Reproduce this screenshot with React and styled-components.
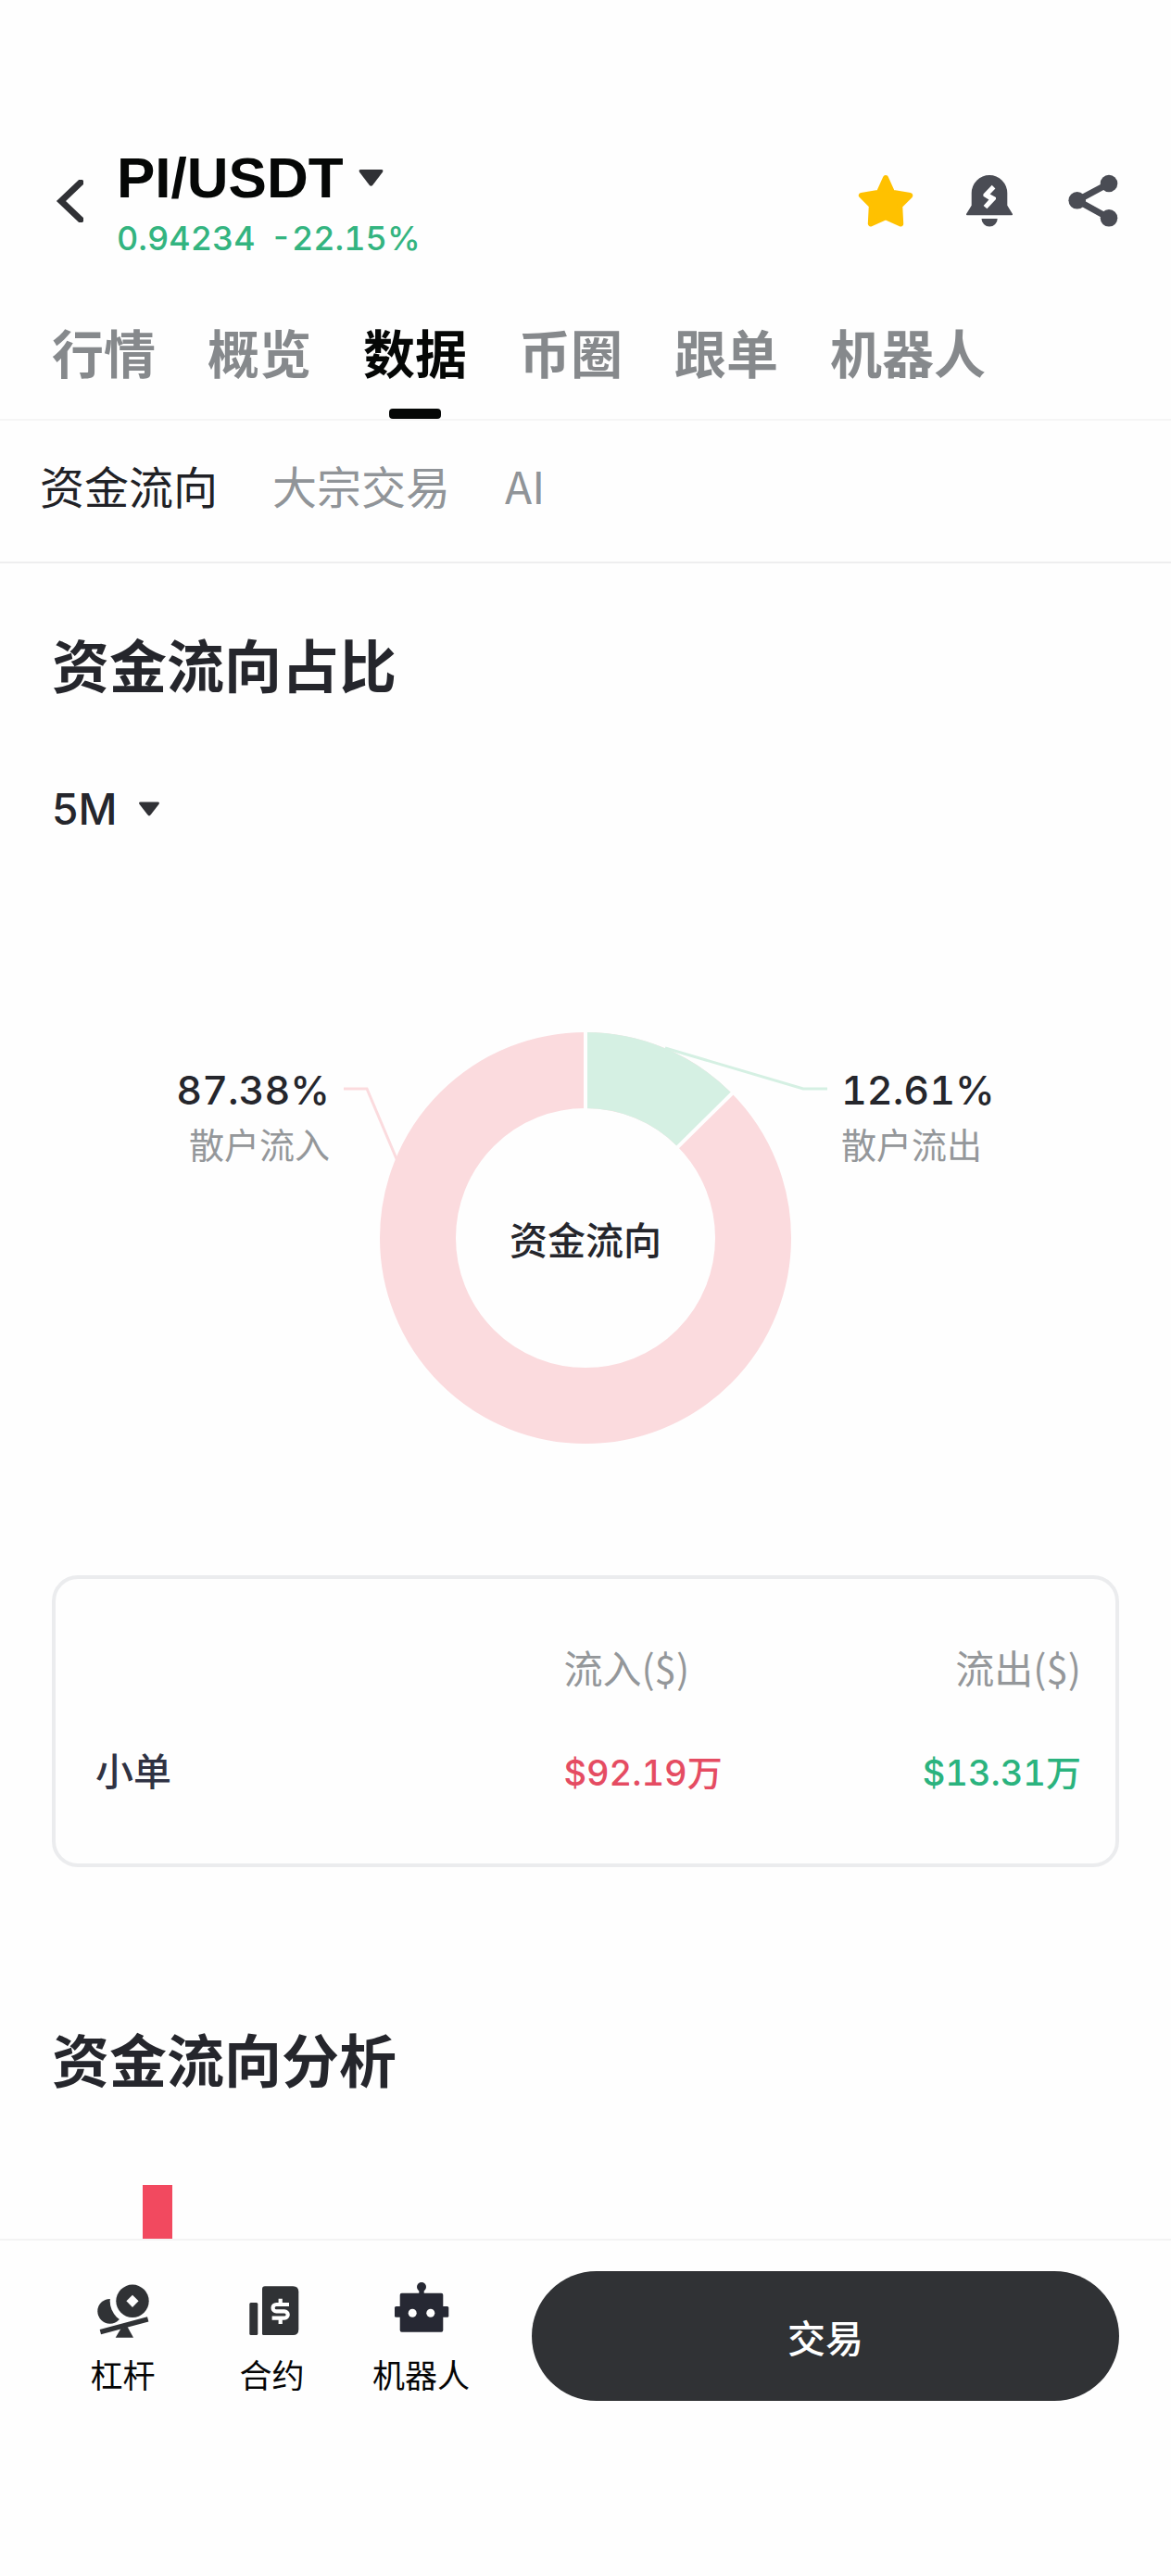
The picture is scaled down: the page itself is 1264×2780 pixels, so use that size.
import React, { useState } from 'react';
import styled, { createGlobalStyle } from 'styled-components';

const cjk = `"Noto Sans CJK SC", sans-serif`;
const latin = `Inter, "Noto Sans CJK SC", sans-serif`;

const GlobalStyle = createGlobalStyle`
  * {
    box-sizing: border-box;
  }
  body {
    margin: 0;
    background: #fefefe;
    color: #25262c;
    font-family: ${cjk};
  }
  h1, h2, p, figure {
    margin: 0;
  }
  button, select {
    padding: 0;
    border: none;
    background: none;
    color: inherit;
    font-family: inherit;
    cursor: pointer;
  }
  svg {
    display: block;
  }
`;

const Page = styled.div`
  display: flex;
  flex-direction: column;
  min-height: 100vh;
`;

const Header = styled.header`
  display: flex;
  align-items: center;
  padding: 160px 54px 0 60px;
`;

const BackButton = styled.button`
  width: 30px;
  margin-right: 36px;
`;

const PairInfo = styled.div`
  flex: 1;
`;

const PairButton = styled.button`
  display: flex;
  align-items: center;
  gap: 16px;
`;

const PairName = styled.h1`
  font: 700 62px/64px "Liberation Sans", Arial, sans-serif;
  color: #050706;
`;

const Price = styled.p`
  display: flex;
  gap: 16px;
  margin-top: 16px;
  font: 500 36px/34px ${latin};
  font-variant-numeric: tabular-nums;
  color: #33b480;
`;

const Actions = styled.div`
  display: flex;
  gap: 52px;
`;

const TabBar = styled.nav`
  display: flex;
  gap: 56px;
  margin-top: 75px;
  padding: 0 56px;
  border-bottom: 2px solid #f5f5f5;
`;

const Tab = styled.button`
  display: flex;
  flex-direction: column;
  align-items: center;
  gap: 32px;
  font-size: 56px;
  font-weight: 700;
  line-height: 60px;
  white-space: nowrap;
  color: ${(p) => (p.$active ? '#050706' : '#86898c')};

  &::after {
    content: '';
    width: 56px;
    height: 11px;
    border-radius: 4px;
    background: ${(p) => (p.$active ? '#050706' : 'transparent')};
  }
`;

const SubTabBar = styled.nav`
  display: flex;
  gap: 59px;
  padding: 39px 43px 53px;
  border-bottom: 2px solid #eeeeef;
`;

const SubTab = styled.button`
  font-size: 48px;
  line-height: 60px;
  color: ${(p) => (p.$active ? '#202126' : '#909498')};
`;

const Main = styled.main`
  flex: 1;
  padding: 73px 56px 0;
`;

const SectionTitle = styled.h2`
  font-size: 62px;
  font-weight: 700;
  line-height: 70px;
`;

const Period = styled.label`
  display: flex;
  align-items: center;
  gap: 24px;
  margin-top: 97px;
`;

const PeriodSelect = styled.select`
  appearance: none;
  field-sizing: content;
  font: 500 46px/50px ${latin};
`;

const Chart = styled.figure`
  display: grid;
  grid-template-columns: 1fr 522px 1fr;
  column-gap: 15px;
  margin-top: 216px;
`;

const Share = styled.div`
  padding-top: 38px;
  text-align: ${(p) => p.$align};
`;

const Percent = styled.p`
  font: 500 43px/48px ${latin};
  font-variant-numeric: tabular-nums;
`;

const ShareName = styled.p`
  margin-top: 12px;
  font-size: 38px;
  line-height: 44px;
  color: #94979a;
`;

const Ring = styled.div`
  display: grid;
  place-items: center;

  > * {
    grid-area: 1 / 1;
  }
`;

const RingTitle = styled.figcaption`
  font-size: 41px;
  font-weight: 500;
  line-height: 48px;
`;

const Card = styled.div`
  margin-top: 142px;
  padding: 70px 37px 73px 43px;
  border: 4px solid #ebecee;
  border-radius: 28px;
`;

const FlowTable = styled.table`
  width: 100%;
  table-layout: fixed;
  border-collapse: collapse;
  line-height: 50px;

  th, td {
    padding: 0;
    text-align: left;
    vertical-align: baseline;
  }
  thead th {
    padding-bottom: 60px;
    font-size: 42px;
    font-weight: 400;
    color: #94979a;
  }
  tbody th {
    font-size: 41px;
    font-weight: 500;
    color: #2f3243;
  }
  th:first-child {
    width: 47.5%;
  }
  th:last-child, td:last-child {
    text-align: right;
  }
`;

const Amount = styled.td`
  font: 500 38px/50px ${latin};
  font-variant-numeric: tabular-nums;
  color: ${(p) => (p.$up ? '#e54c62' : '#2bb37e')};
`;

const Analysis = styled.section`
  margin-top: 171px;
`;

const BarChart = styled.div`
  display: flex;
  height: 58px;
  margin-top: 102px;
  padding-left: 98px;
`;

const Bar = styled.div`
  width: 32px;
  background: #f2495f;
`;

const Footer = styled.footer`
  display: flex;
  align-items: center;
  gap: 39px;
  padding: 33px 56px 189px 52px;
  border-top: 2px solid #f3f3f3;
`;

const FooterNav = styled.nav`
  flex: 483;
  display: grid;
  grid-template-columns: repeat(3, 1fr);
  padding-top: 5px;
`;

const FooterLink = styled.a`
  display: flex;
  flex-direction: column;
  align-items: center;
  gap: 17px;
  font-size: 35px;
  line-height: 44px;
  color: #050505;
  text-decoration: none;
`;

const TradeButton = styled.button`
  flex: 634;
  height: 140px;
  border-radius: 70px;
  background: #303235;
  color: #fff;
  font-size: 41px;
  font-weight: 500;
`;

const Caret = ({ width, height }) => (
  <svg width={width} height={height} viewBox="0 0 26 18" fill="#303135" aria-hidden="true">
    <path d="M2 0H24Q27 0 25.3 3L15 16.5Q13 19 11 16.5L.7 3Q-1 0 2 0Z" />
  </svg>
);

const StarIcon = () => (
  <svg width="60" height="60" viewBox="0 0 60 60" fill="#ffc100" stroke="#ffc100" strokeWidth="6" strokeLinejoin="round">
    <path d="M30 5L37 20.6L56.3 24L45.2 35L46.2 54.4L30 47.2L13.8 54.4L14.8 35L3.9 24L23 20.6Z" />
  </svg>
);

const BellIcon = () => (
  <svg width="60" height="60" viewBox="0 0 60 60" fill="#4a4c54">
    <path d="M10.7 21.3A19.3 19.3 0 0 1 49.3 21.3V34.7L55 44Q55.3 45.3 54 45.3H6Q4.7 45.3 5 44L10.7 34.7Z" />
    <path d="M21.5 49H38.7A8.6 8.6 0 0 1 21.5 49Z" />
    <path fill="#fff" d="M32.7 12.8L36.4 16.4L30.6 22.4L37 26V28L27.4 38.2L23.6 35L29.4 28.6L23.4 24.8V22.5Z" />
  </svg>
);

const ShareIcon = () => (
  <svg width="60" height="60" viewBox="0 0 60 60" fill="#4a4c54">
    <path d="M47 11L12.7 29.3L47 48.3" fill="none" stroke="#4a4c54" strokeWidth="7" />
    <circle cx="12.7" cy="29.3" r="9.3" />
    <circle cx="47" cy="11" r="9.3" />
    <circle cx="47" cy="48.3" r="9.3" />
  </svg>
);

const LeverIcon = () => (
  <svg width="60" height="60" viewBox="0 0 60 60" fill="#303235">
    <circle cx="15.7" cy="31.3" r="13.4" />
    <circle cx="40" cy="20.3" r="24.3" fill="#fefefe" />
    <circle cx="40" cy="20.3" r="17.7" />
    <path fill="#fefefe" d="M40 13.7L46.6 20.3L40 26.9L33.4 20.3Z" />
    <path d="M4.7 51L56 37.3L57.4 42.4L6 56.3Z" />
    <path d="M27.5 50L34.5 48L41 59.7H21.7Z" />
  </svg>
);

const ContractIcon = () => (
  <svg width="60" height="60" viewBox="0 0 60 60" fill="#303235">
    <rect x="5.3" y="22" width="9" height="35" rx="1.5" />
    <path d="M22 4.3H52.3Q58.3 4.3 58.3 10.3V51Q58.3 57 52.3 57H20.5Q19 57 19 55.5V7.3Q19 4.3 22 4.3Z" />
    <path
      d="M48 24H34.2a3.65 3.65 0 0 0 0 7.3h8.8a3.7 3.7 0 0 1 0 7.4H29.6M38.7 17.7V24M38.7 38.7V45"
      fill="none"
      stroke="#fff"
      strokeWidth="4.2"
    />
  </svg>
);

const RobotIcon = () => (
  <svg width="60" height="60" viewBox="0 0 60 60" fill="#262833">
    <circle cx="30" cy="5" r="5" />
    <rect x="27.3" y="6" width="5.4" height="8" />
    <rect x="6.7" y="11.7" width="46.6" height="42" rx="2" />
    <rect x="1" y="26" width="58.3" height="11.7" rx="1.5" />
    <circle cx="20.2" cy="33.2" r="4.5" fill="#fff" />
    <circle cx="39.8" cy="33.2" r="4.5" fill="#fff" />
  </svg>
);

// share of the outflow slice, the rest of the ring is inflow
const OUTFLOW = 0.1261;

const DonutChart = () => {
  const cx = 261;
  const cy = 222;
  const point = (r, share) => {
    const a = share * Math.PI * 2;
    return `${cx + r * Math.sin(a)} ${cy - r * Math.cos(a)}`;
  };
  return (
    <svg width="522" height="444" viewBox="0 0 522 444" fill="none" aria-hidden="true">
      <circle cx={cx} cy={cy} r="181" stroke="#fbdbde" strokeWidth="82" />
      <path d={`M${point(181, 0)}A181 181 0 0 1 ${point(181, OUTFLOW)}`} stroke="#d5f0e3" strokeWidth="82" />
      <path
        d={`M${point(138, 0)}L${point(224, 0)}M${point(138, OUTFLOW)}L${point(224, OUTFLOW)}`}
        stroke="#fefefe"
        strokeWidth="4"
      />
      <path d="M0 61H25L58 139" stroke="#fbdbde" strokeWidth="3" />
      <path d="M347 17L496 61H522" stroke="#d5f0e3" strokeWidth="3" />
    </svg>
  );
};

const tabs = ['行情', '概览', '数据', '币圈', '跟单', '机器人'];
const subTabs = ['资金流向', '大宗交易', 'AI'];

export default function App() {
  const [tab, setTab] = useState('数据');
  const [subTab, setSubTab] = useState('资金流向');

  return (
    <>
      <GlobalStyle />
      <Page>
        <Header>
          <BackButton aria-label="返回">
            <svg width="30" height="46" viewBox="0 0 30 46" fill="none">
              <path d="M27 3L6 23L27 43" stroke="#303135" strokeWidth="7" strokeLinecap="round" />
            </svg>
          </BackButton>
          <PairInfo>
            <PairButton>
              <PairName>PI/USDT</PairName>
              <Caret width={27} height={18} />
            </PairButton>
            <Price>
              <span>0.94234</span>
              <span>-22.15%</span>
            </Price>
          </PairInfo>
          <Actions>
            <button aria-label="收藏"><StarIcon /></button>
            <button aria-label="提醒"><BellIcon /></button>
            <button aria-label="分享"><ShareIcon /></button>
          </Actions>
        </Header>

        <TabBar>
          {tabs.map((name) => (
            <Tab key={name} $active={name === tab} onClick={() => setTab(name)}>
              {name}
            </Tab>
          ))}
        </TabBar>
        <SubTabBar>
          {subTabs.map((name) => (
            <SubTab key={name} $active={name === subTab} onClick={() => setSubTab(name)}>
              {name}
            </SubTab>
          ))}
        </SubTabBar>

        <Main>
          <section>
            <SectionTitle>资金流向占比</SectionTitle>
            <Period>
              <PeriodSelect aria-label="周期" defaultValue="5M">
                <option>5M</option>
              </PeriodSelect>
              <Caret width={22} height={16} />
            </Period>
            <Chart>
              <Share $align="right">
                <Percent>87.38%</Percent>
                <ShareName>散户流入</ShareName>
              </Share>
              <Ring>
                <DonutChart />
                <RingTitle>资金流向</RingTitle>
              </Ring>
              <Share $align="left">
                <Percent>12.61%</Percent>
                <ShareName>散户流出</ShareName>
              </Share>
            </Chart>
            <Card>
              <FlowTable>
                <thead>
                  <tr>
                    <th></th>
                    <th scope="col">流入($)</th>
                    <th scope="col">流出($)</th>
                  </tr>
                </thead>
                <tbody>
                  <tr>
                    <th scope="row">小单</th>
                    <Amount $up>$92.19万</Amount>
                    <Amount>$13.31万</Amount>
                  </tr>
                </tbody>
              </FlowTable>
            </Card>
          </section>
          <Analysis>
            <SectionTitle>资金流向分析</SectionTitle>
            <BarChart>
              <Bar />
            </BarChart>
          </Analysis>
        </Main>

        <Footer>
          <FooterNav>
            <FooterLink href="#margin"><LeverIcon />杠杆</FooterLink>
            <FooterLink href="#futures"><ContractIcon />合约</FooterLink>
            <FooterLink href="#bot"><RobotIcon />机器人</FooterLink>
          </FooterNav>
          <TradeButton>交易</TradeButton>
        </Footer>
      </Page>
    </>
  );
}
